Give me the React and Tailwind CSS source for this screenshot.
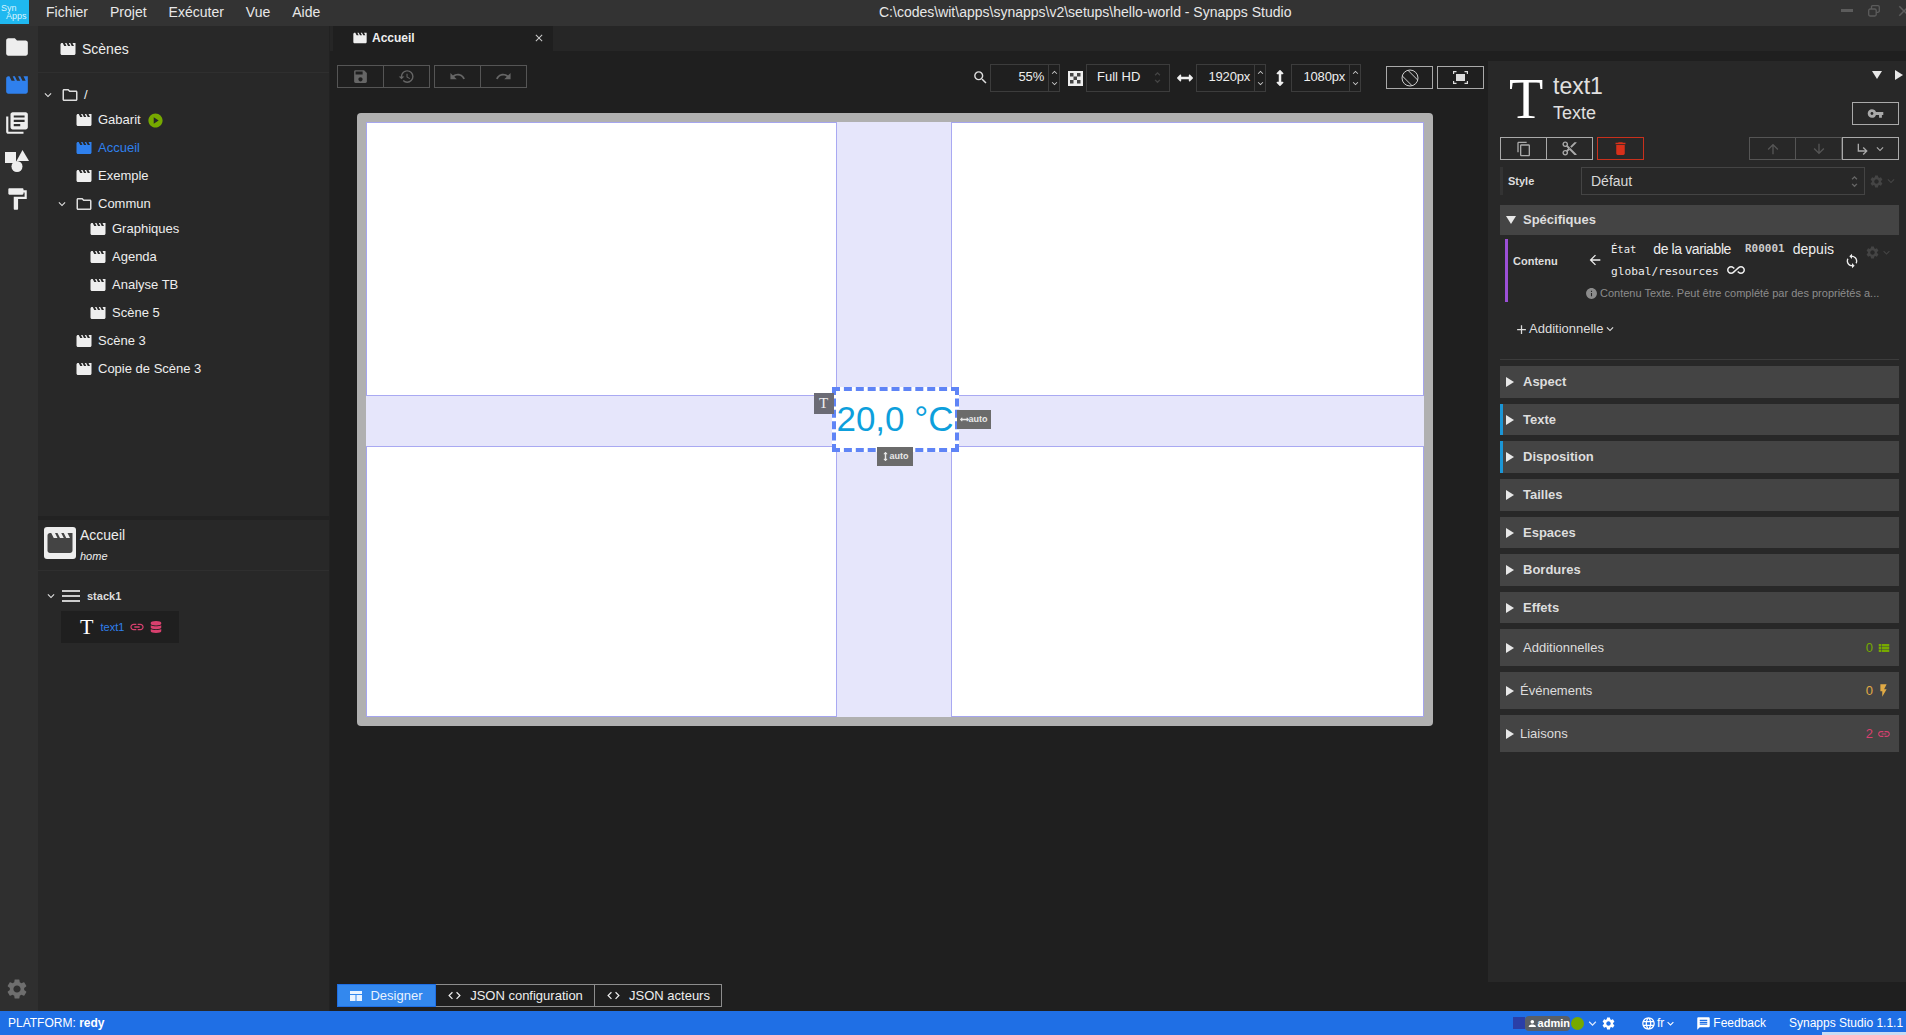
import React from 'react';
import {
  MdMovie, MdFolder, MdLibraryBooks, MdFormatPaint, MdOutlineFolder, MdPlayCircle, MdExpandMore, MdMenu, MdLink,
  MdSave, MdRestore, MdUndo, MdRedo, MdSearch, MdClose, MdUnfoldMore, MdKeyboardArrowUp, MdKeyboardArrowDown,
  MdVpnKey, MdContentCopy, MdContentCut, MdDelete, MdArrowUpward, MdArrowDownward, MdSubdirectoryArrowRight,
  MdSettings, MdSync, MdInfo, MdArrowBack, MdAllInclusive, MdAdd, MdViewList, MdFlashOn, MdCode, MdPerson,
  MdLanguage, MdMessage, MdOutlineKeyboardArrowDown,
} from 'react-icons/md';
import { FaDatabase, FaArrowsAltH, FaArrowsAltV } from 'react-icons/fa';

const Shapes = () => (
  <svg width="24" height="22" viewBox="0 0 24 22" fill="#eee">
    <rect x="0" y="2" width="11" height="11" />
    <path d="M17.5 0 L24 11 H11.5 Z" />
    <circle cx="12" cy="16.5" r="5.5" />
  </svg>
);

const Checker = () => (
  <svg width="15" height="15" viewBox="0 0 15 15">
    <rect width="15" height="15" fill="#eee" />
    <rect x="2" y="2" width="3.5" height="3.5" fill="#444" />
    <rect x="9" y="2" width="3.5" height="3.5" fill="#444" />
    <rect x="5.5" y="5.5" width="3.5" height="3.5" fill="#444" />
    <rect x="2" y="9" width="3.5" height="3.5" fill="#444" />
    <rect x="9" y="9" width="3.5" height="3.5" fill="#444" />
  </svg>
);

const Rotate = () => (
  <svg width="18" height="18" viewBox="0 0 18 18" fill="none" stroke="#cfcfcf" strokeWidth="1">
    <circle cx="9" cy="9" r="8" />
    <path d="M6.93 1.27 L16.73 11.07 M1.27 6.93 L11.07 16.73" />
  </svg>
);

const Fit = () => (
  <svg width="15" height="13" viewBox="0 0 15 13" fill="none" stroke="#ddd" strokeWidth="1.2">
    <path d="M0.6 3 V0.6 H3.5 M11.5 0.6 H14.4 V3 M14.4 10 V12.4 H11.5 M3.5 12.4 H0.6 V10" />
    <rect x="3" y="3" width="9" height="7" fill="#ddd" stroke="none" />
  </svg>
);

const Layout = () => (
  <svg width="12" height="10" viewBox="0 0 12 10" fill="#e8f2ff">
    <rect x="0" y="0" width="12" height="3" />
    <rect x="0" y="4" width="5.5" height="6" />
    <rect x="6.5" y="4" width="5.5" height="6" />
  </svg>
);

const Row = ({ x, label, active, children }) => (
  <div className="h-[28px] flex items-center text-[13px] text-[#eeeeee]" style={{ paddingLeft: x }}>
    <MdMovie size={18} className={active ? 'text-[#2f80ed]' : 'text-[#eeeeee]'} />
    <span className={active ? 'ml-[5px] text-[#2f80ed]' : 'ml-[5px]'}>{label}</span>
    {children}
  </div>
);

const Folder = ({ x, label }) => (
  <div className="mt-[3px] h-[22px] flex items-center text-[13px] text-[#eeeeee]" style={{ paddingLeft: x }}>
    <MdExpandMore size={14} className="text-[#dddddd]" />
    <MdOutlineFolder size={18} className="ml-[6px] text-[#dddddd]" />
    <span className="ml-[5px]">{label}</span>
  </div>
);

const Section = ({ h, label, bar, light, tight, children }) => (
  <div className={`mt-[6px] flex items-center bg-[#444444] relative pr-[8px] ${h}`}>
    {bar && <div className="absolute left-0 top-0 bottom-0 w-[3px] bg-[#1b96d6]" />}
    <div className="ml-[6px] w-0 h-0 border-y-[5px] border-y-transparent border-l-[8px] border-l-[#e8e8e8]" />
    <span className={`${tight ? 'ml-[6px]' : 'ml-[9px]'} text-[13px] text-[#dddddd] ${light ? '' : 'font-bold'}`}>{label}</span>
    {children}
  </div>
);

const Btn = ({ w, first, color, children }) => (
  <div className={`${w} h-[23px] flex items-center justify-center border ${color} ${first ? '' : 'border-l-0'}`}>{children}</div>
);

const Spin = ({ w, value }) => (
  <div className={`${w} h-[28px] flex items-center border border-[#3c3c3c] text-[13px] tracking-[-0.2px] text-[#eeeeee]`}>
    <span className="flex-1 text-right pr-[4px] pb-[2px]">{value}</span>
    <div className="w-[11px] h-full border-l border-[#3c3c3c] flex flex-col items-center justify-center text-[#cccccc]">
      <MdKeyboardArrowUp size={11} />
      <MdKeyboardArrowDown size={11} />
    </div>
  </div>
);

const Tab = ({ w, on, icon, label }) => (
  <div className={`${w} h-[23px] flex items-center justify-center gap-[8px] text-[13px] border ${on ? 'bg-[#3388ee] border-[#1f6fe5] text-[#e8f2ff]' : 'border-[#8c8c8c] border-l-0 text-[#eeeeee]'}`}>
    {icon}
    <span>{label}</span>
  </div>
);

export default function App() {
  return (
    <div className="w-[1906px] h-[1035px] flex flex-col overflow-hidden bg-[#1f1f1f] font-['Liberation_Sans',Arial,sans-serif] relative">
      {/* title bar */}
      <div className="h-[26px] shrink-0 bg-[#333333] flex items-start text-[14px] text-[#e8e8e8]">
        <div className="w-[29px] h-[24px] bg-[#1fb8f0] text-[9px] leading-[8px] text-[#d8f4ff] pt-[4px] pl-[1px] shrink-0">
          <div>Syn</div>
          <div className="pl-[5px]">Apps</div>
        </div>
        <div className="w-[850px] flex h-[24px] items-center shrink-0 pl-[17px] gap-[22px]">
          <span>Fichier</span><span>Projet</span><span>Exécuter</span><span>Vue</span><span>Aide</span>
        </div>
        <div className="h-[24px] flex items-center">C:\codes\wit\apps\synapps\v2\setups\hello-world - Synapps Studio</div>
        <div className="ml-auto h-[21px] flex items-center text-[#5c5c5c] gap-[15px] pr-0 mr-[-7px]">
          <div className="w-[12px] h-[3px] bg-[#5c5c5c]" />
          <svg width="12" height="12" viewBox="0 0 12 12" fill="none" stroke="#5c5c5c" strokeWidth="1.3"><rect x="0.7" y="4" width="7.5" height="7" rx="1.5" /><path d="M3.5 4 V1.8 Q3.5 0.7 4.6 0.7 H10 Q11.3 0.7 11.3 2 V6 Q11.3 7.5 8.2 7.5" /></svg>
          <MdClose size={18} />
        </div>
      </div>

      {/* body */}
      <div className="flex-1 flex min-h-0">
        {/* rail */}
        <div className="w-[38px] shrink-0 bg-[#2f2f2f] flex flex-col items-center pt-[2px] pr-[4px]">
          <div className="h-[38px] flex items-center"><MdFolder size={26} className="text-[#eeeeee]" /></div>
          <div className="h-[38px] flex items-center"><MdMovie size={26} className="text-[#2f80ed]" /></div>
          <div className="h-[38px] flex items-center"><MdLibraryBooks size={26} className="text-[#eeeeee]" /></div>
          <div className="h-[38px] flex items-center"><Shapes /></div>
          <div className="h-[38px] flex items-center"><MdFormatPaint size={26} className="text-[#eeeeee]" /></div>
          <div className="mt-auto mb-[10px] text-[#6e6e6e]"><MdSettings size={24} /></div>
        </div>

        {/* sidebar */}
        <div className="w-[292px] shrink-0 flex flex-col bg-[#222222] pr-[1px]">
          <div className="h-[490px] bg-[#282828]">
            <div className="h-[47px] flex items-center pl-[21px] border-b border-[#2f2f2f] text-[14px] text-[#eeeeee]">
              <MdMovie size={18} />
              <span className="ml-[5px]">Scènes</span>
            </div>
            <div className="pt-[8px]">
              <Folder x={3} label="/" />
              <Row x={37} label="Gabarit">
                <MdPlayCircle size={17} className="ml-[6px] text-[#76a900]" />
              </Row>
              <Row x={37} label="Accueil" active />
              <Row x={37} label="Exemple" />
              <Folder x={17} label="Commun" />
              <Row x={51} label="Graphiques" />
              <Row x={51} label="Agenda" />
              <Row x={51} label="Analyse TB" />
              <Row x={51} label="Scène 5" />
              <Row x={37} label="Scène 3" />
              <Row x={37} label="Copie de Scène 3" />
            </div>
          </div>
          <div className="mt-[4px] flex-1 bg-[#282828]">
            <div className="h-[51px] flex border-b border-[#2f2f2f] pl-[6px]">
              <div className="mt-[7px] w-[32px] h-[32px] rounded-[3px] bg-[#eeeeee] flex items-center justify-center">
                <MdMovie size={30} className="text-[#444444]" />
              </div>
              <div className="ml-[4px] mt-[6px] text-[#eeeeee]">
                <div className="text-[14px] leading-[18px]">Accueil</div>
                <div className="text-[11px] italic leading-[14px] mt-[5px]">home</div>
              </div>
            </div>
            <div className="h-[40px] pt-[10px] pl-[6px] flex items-center text-[11px] font-bold text-[#dddddd]">
              <MdExpandMore size={14} />
              <MdMenu size={24} className="ml-[1px] text-[#cccccc]" />
              <span className="ml-[4px]">stack1</span>
            </div>
            <div className="ml-[23px] w-[118px] h-[32px] bg-[#1f1f1f] flex items-center">
              <span className="ml-[19px] text-[22px] text-white font-['Liberation_Serif',serif] leading-none">T</span>
              <span className="ml-[7px] text-[11px] text-[#2f80ed]">text1</span>
              <MdLink size={16} className="ml-[5px] text-[#d8406e]" />
              <FaDatabase size={12} className="ml-[5px] text-[#d8406e]" />
            </div>
          </div>
        </div>

        {/* main */}
        <div className="flex-1 flex flex-col min-w-0">
          <div className="h-[25px] shrink-0 bg-[#262626] pl-[3px] flex">
            <div className="w-[220px] bg-[#1f1f1f] flex items-center pl-[19px] pb-[2px] text-[12px] font-bold text-[#eeeeee]">
              <MdMovie size={16} />
              <span className="ml-[4px]">Accueil</span>
              <MdClose size={12} className="ml-auto mr-[8px] text-[#cccccc]" />
            </div>
          </div>

          <div className="flex-1 flex min-h-0">
            {/* center */}
            <div className="w-[1158px] shrink-0 flex flex-col">
              <div className="h-[41px] shrink-0 flex items-start pl-[7px] pt-[13px]">
                <div className="flex mt-[1px]">
                  <Btn w="w-[47px]" first color="border-[#555555]"><MdSave size={17} className="text-[#666666]" /></Btn>
                  <Btn w="w-[46px]" color="border-[#555555]"><MdRestore size={17} className="text-[#666666]" /></Btn>
                </div>
                <div className="flex mt-[1px] ml-[4px]">
                  <Btn w="w-[47px]" first color="border-[#555555]"><MdUndo size={17} className="text-[#666666]" /></Btn>
                  <Btn w="w-[46px]" color="border-[#555555]"><MdRedo size={17} className="text-[#666666]" /></Btn>
                </div>
                <MdSearch size={17} className="ml-[445px] mt-[5px] text-[#dddddd]" />
                <div className="ml-[1px]"><Spin w="w-[70px]" value="55%" /></div>
                <div className="ml-[8px] mt-[7px]"><Checker /></div>
                <div className="ml-[3px] w-[84px] h-[28px] flex items-center border border-[#3c3c3c] text-[13px] text-[#eeeeee] pl-[10px] pb-[2px]">
                  <span>Full HD</span>
                  <MdUnfoldMore size={15} className="ml-auto mr-[4px] text-[#444444]" />
                </div>
                <FaArrowsAltH size={16} className="ml-[7px] mt-[6px] text-[#eeeeee]" />
                <div className="ml-[3px]"><Spin w="w-[70px]" value="1920px" /></div>
                <FaArrowsAltV size={16} className="ml-[6px] mt-[6px] text-[#eeeeee]" />
                <div className="ml-[3px]"><Spin w="w-[70px]" value="1080px" /></div>
                <div className="flex mt-[2px] ml-[25px] gap-[4px]">
                  <Btn w="w-[47px]" first color="border-[#aaaaaa]"><Rotate /></Btn>
                  <Btn w="w-[47px]" first color="border-[#aaaaaa]"><Fit /></Btn>
                </div>
              </div>

              {/* canvas */}
              <div className="ml-[27px] mt-[21px] w-[1076px] h-[613px] shrink-0 bg-[#b0b0b0] rounded-[4px] pl-[9px] pt-[9px]">
                <div className="relative w-[1058px] h-[595px] bg-white flex items-center justify-center">
                  <div className="absolute inset-0 border border-[#a5a5ee]" />
                  <div className="absolute top-0 bottom-0 left-[470px] w-[116px] bg-[#e6e6fb] border-x border-[#a9a9f2]" />
                  <div className="absolute left-0 right-0 top-[273px] h-[52px] bg-[#e6e6fb] border-y border-[#a9a9f2]" />
                  <div className="relative w-[127px] h-[65px] bg-white border-[4px] border-dashed border-[#5f84f6] flex items-center justify-center">
                    <span className="text-[35px] leading-none text-[#0d9fdc] whitespace-nowrap pb-[2px]">20,0 °C</span>
                    <div className="absolute left-[-22px] top-[2px] w-[20px] h-[21px] bg-[#6b6b75] flex items-center justify-center text-[15px] text-[#eeeeee] font-['Liberation_Serif',serif]">T</div>
                    <div className="absolute right-[-36px] top-[19px] w-[34px] h-[19px] bg-[#6b6b6b] flex items-center justify-center text-[9px] font-bold text-[#e8e8e8]">
                      <FaArrowsAltH size={9} />
                      <span>auto</span>
                    </div>
                    <div className="absolute left-[41px] bottom-[-18px] w-[36px] h-[19px] bg-[#6b6b6b] flex items-center justify-center text-[9px] font-bold text-[#e8e8e8]">
                      <FaArrowsAltV size={9} />
                      <span>auto</span>
                    </div>
                  </div>
                </div>
              </div>

              <div className="mt-auto mb-[4px] ml-[7px] flex">
                <Tab w="w-[99px]" on icon={<Layout />} label="Designer" />
                <Tab w="w-[159px]" icon={<MdCode size={15} />} label="JSON configuration" />
                <Tab w="w-[127px]" icon={<MdCode size={15} />} label="JSON acteurs" />
              </div>
            </div>

            {/* right panel */}
            <div className="flex-1 mt-[10px] mb-[29px] bg-[#282828] pl-[12px] pr-[7px] min-w-0">
              <div className="h-[76px] relative">
                <span className="absolute left-[9px] top-[8px] text-[56px] leading-[60px] text-white font-['Liberation_Serif',serif]">T</span>
                <div className="absolute left-[53px] top-[11px] text-[23px] leading-[28px] text-[#e0e0e0]">text1</div>
                <div className="absolute left-[53px] top-[41px] text-[18px] leading-[22px] text-[#e0e0e0]">Texte</div>
                <div className="absolute right-[8px] top-[2px] flex items-center gap-[13px] mt-[7px]">
                  <div className="w-0 h-0 border-x-[5px] border-x-transparent border-t-[8px] border-t-[#e8e8e8]" />
                  <div className="w-0 h-0 border-y-[5px] border-y-transparent border-l-[8px] border-l-[#e8e8e8] mr-[-12px]" />
                </div>
                <div className="absolute right-0 top-[41px]">
                  <Btn w="w-[47px]" first color="border-[#aaaaaa]"><MdVpnKey size={17} className="text-[#aaaaaa]" /></Btn>
                </div>
              </div>
              <div className="flex">
                <Btn w="w-[47px]" first color="border-[#aaaaaa]"><MdContentCopy size={16} className="text-[#aaaaaa]" /></Btn>
                <Btn w="w-[46px]" color="border-[#aaaaaa]"><MdContentCut size={17} className="text-[#aaaaaa]" /></Btn>
                <div className="ml-[4px]"><Btn w="w-[47px]" first color="border-[#c9301c]"><MdDelete size={17} className="text-[#d8301a]" /></Btn></div>
                <div className="ml-auto flex">
                  <Btn w="w-[47px]" first color="border-[#555555]"><MdArrowUpward size={16} className="text-[#555555]" /></Btn>
                  <Btn w="w-[46px]" color="border-[#555555]"><MdArrowDownward size={16} className="text-[#555555]" /></Btn>
                  <div className="w-[57px] h-[23px] flex items-center justify-center border border-l-[#aaaaaa] border-[#aaaaaa] text-[#aaaaaa]">
                    <MdSubdirectoryArrowRight size={16} />
                    <MdExpandMore size={14} className="ml-[2px]" />
                  </div>
                </div>
              </div>
              <div className="mt-[7px] h-[28px] flex items-center border-l-[3px] border-[#333333] relative">
                <span className="ml-[5px] w-[73px] text-[11px] font-bold text-[#dddddd]">Style</span>
                <div className="w-[284px] h-[28px] border border-[#444444] flex items-center pl-[9px] text-[14px] text-[#d8d8d8]">
                  <span>Défaut</span>
                  <MdUnfoldMore size={15} className="ml-auto mr-[2px] text-[#666666]" />
                </div>
                <MdSettings size={15} className="ml-[4px] text-[#444444]" />
                <MdExpandMore size={14} className="text-[#444444]" />
              </div>
              <div className="mt-[10px] h-[30px] bg-[#444444] flex items-center">
                <div className="ml-[6px] w-0 h-0 border-x-[5px] border-x-transparent border-t-[8px] border-t-[#e8e8e8]" />
                <span className="ml-[7px] text-[13px] font-bold text-[#dddddd]">Spécifiques</span>
              </div>
              <div className="mt-[4px] ml-[5px] h-[63px] border-l-[3px] border-[#9c4fd6] flex relative">
                <span className="ml-[5px] mt-[14px] w-[74px] text-[11px] font-bold text-[#dddddd]">Contenu</span>
                <MdArrowBack size={16} className="mt-[13px] text-[#eeeeee]" />
                <div className="ml-[8px] w-[240px] text-[#eeeeee]">
                  <div className="h-[21px] flex items-center text-[14px] tracking-[-0.4px] whitespace-nowrap">
                    <span className="font-['DejaVu_Sans_Mono',monospace] text-[10.5px] tracking-normal mt-[1px]">État</span>
                    <span className="ml-[17px]">de la variable</span>
                    <span className="ml-[14px] font-['DejaVu_Sans_Mono',monospace] text-[11px] font-bold tracking-normal text-[#cccccc]">R00001</span>
                    <span className="ml-[8px] tracking-normal">depuis</span>
                  </div>
                  <div className="h-[25px] flex items-center">
                    <span className="font-['DejaVu_Sans_Mono',monospace] text-[11.2px]">global/resources</span>
                    <MdAllInclusive size={18} className="ml-[8px] mt-[-6px]" />
                  </div>
                </div>
                <MdSync size={16} className="absolute left-[336px] top-[14px] text-[#eeeeee]" />
                <MdSettings size={15} className="absolute left-[357px] top-[6px] text-[#444444]" />
                <MdExpandMore size={13} className="absolute left-[372px] top-[7px] text-[#444444]" />
                <div className="absolute left-[77px] top-[46px] flex items-center text-[11px] text-[#8c8c8c] whitespace-nowrap">
                  <MdInfo size={13} className="mr-[2px]" />
                  <span>Contenu Texte. Peut être complété par des propriétés a...</span>
                </div>
              </div>
              <div className="mt-[16px] ml-[14px] h-[22px] flex items-center text-[13px] text-[#dddddd]">
                <MdAdd size={15} />
                <span>Additionnelle</span>
                <MdExpandMore size={14} />
              </div>
              <div className="mt-[19px] h-px bg-[#3c3c3c]" />
              <Section h="h-[32px]" label="Aspect" />
              <Section h="h-[31px]" label="Texte" bar />
              <Section h="h-[32px]" label="Disposition" bar />
              <Section h="h-[32px]" label="Tailles" />
              <Section h="h-[31px]" label="Espaces" />
              <Section h="h-[32px]" label="Bordures" />
              <Section h="h-[31px]" label="Effets" />
              <Section h="h-[37px]" label="Additionnelles" light>
                <span className="ml-auto text-[13px] text-[#76a900]">0</span>
                <MdViewList size={14} className="ml-[4px] text-[#76a900]" />
              </Section>
              <Section h="h-[37px]" label="Événements" light tight>
                <span className="ml-auto text-[13px] text-[#e0aa45]">0</span>
                <MdFlashOn size={15} className="ml-[3px] text-[#e0aa45]" />
              </Section>
              <Section h="h-[37px]" label="Liaisons" light tight>
                <span className="ml-auto text-[13px] text-[#d8406e]">2</span>
                <MdLink size={14} className="ml-[4px] text-[#d8406e]" />
              </Section>
            </div>
          </div>
        </div>
      </div>

      {/* status bar */}
      <div className="h-[24px] shrink-0 bg-[#1f6fe5] flex items-center text-[12px] text-white relative">
        <span className="ml-[8px] text-[12px]">PLATFORM: <b>redy</b></span>
        <div className="ml-auto flex items-center whitespace-nowrap">
          <div className="w-[12px] h-[12px] bg-[#2a3fa8]" />
          <div className="h-[15px] w-[45px] rounded-[4px] bg-[#5a5f66] flex items-center text-[11px] font-bold pl-[2px]">
            <MdPerson size={13} />
            <span>admin</span>
          </div>
          <div className="ml-[1px] w-[13px] h-[13px] rounded-full bg-[#76a900]" />
          <MdOutlineKeyboardArrowDown size={15} className="ml-[1px] text-[#dbe8ff]" />
          <MdSettings size={15} className="ml-[1px]" />
          <MdLanguage size={15} className="ml-[25px]" />
          <span className="ml-[1px]">fr</span>
          <MdExpandMore size={13} />
          <MdMessage size={15} className="ml-[19px]" />
          <span className="ml-[2px]">Feedback</span>
          <span className="ml-[23px] w-[117px]">Synapps Studio 1.1.1</span>
        </div>
        <div className="absolute right-0 bottom-0 w-[84px] h-[3px] bg-[#c8dcf4]" />
      </div>
    </div>
  );
}
